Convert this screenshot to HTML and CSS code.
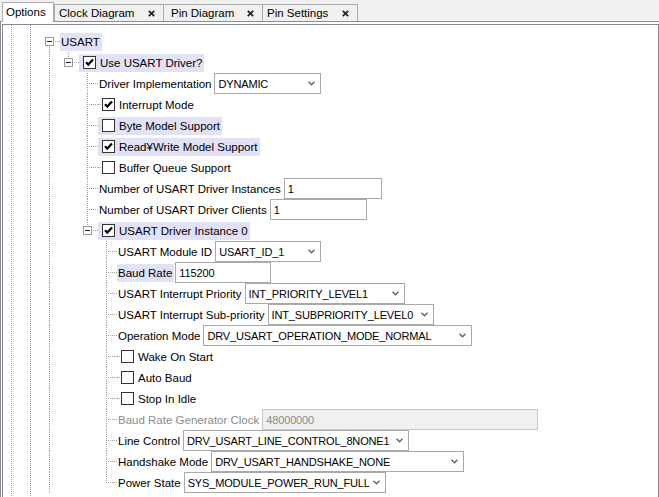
FILE: index.html
```html
<!DOCTYPE html>
<html>
<head>
<meta charset="utf-8">
<link rel="stylesheet" href="styles.css">
</head>
<body>
<div class="tabbar">
  <div class="tab active w-opt">Options</div>
  <div class="tab w-clk">Clock Diagram<svg class="x" width="7" height="7" viewBox="0 0 7 7"><path d="M0.8 0.8L6.2 6.2M6.2 0.8L0.8 6.2"/></svg></div>
  <div class="tab w-pd">Pin Diagram<svg class="x" width="7" height="7" viewBox="0 0 7 7"><path d="M0.8 0.8L6.2 6.2M6.2 0.8L0.8 6.2"/></svg></div>
  <div class="tab w-ps last">Pin Settings<svg class="x" width="7" height="7" viewBox="0 0 7 7"><path d="M0.8 0.8L6.2 6.2M6.2 0.8L0.8 6.2"/></svg></div>
</div>
<div class="page">
  <div class="tree">
    <!-- 0 -->
    <div class="row">
      <div class="g f"><span class="bx"><i></i></span></div>
      <span class="it hl">USART</span>
    </div>
    <!-- 1 -->
    <div class="row">
      <div class="g v"></div>
      <div class="g l"><span class="bx"><i></i></span></div>
      <span class="it ck hl"><span class="cb on"><svg width="11" height="11" viewBox="0 0 11 11"><path d="M2 5.2L4.3 7.6L9 2.6"/></svg></span><span class="lbl">Use USART Driver?</span></span>
    </div>
    <!-- 2 -->
    <div class="row">
      <div class="g v"></div><div class="g"></div>
      <div class="g t"></div>
      <span class="it">Driver Implementation</span>
      <div class="sel w107"><span class="val">DYNAMIC</span><svg class="chev" width="7" height="5" viewBox="0 0 7 5"><path d="M0.5 0.8L3.5 3.8L6.5 0.8"/></svg></div>
    </div>
    <!-- 3 -->
    <div class="row">
      <div class="g v"></div><div class="g"></div>
      <div class="g t"></div>
      <span class="it ck dl"><span class="cb on"><svg width="11" height="11" viewBox="0 0 11 11"><path d="M2 5.2L4.3 7.6L9 2.6"/></svg></span><span class="lbl">Interrupt Mode</span></span>
    </div>
    <!-- 4 -->
    <div class="row">
      <div class="g v"></div><div class="g"></div>
      <div class="g t"></div>
      <span class="it ck hl"><span class="cb"></span><span class="lbl">Byte Model Support</span></span>
    </div>
    <!-- 5 -->
    <div class="row">
      <div class="g v"></div><div class="g"></div>
      <div class="g t"></div>
      <span class="it ck hl"><span class="cb on"><svg width="11" height="11" viewBox="0 0 11 11"><path d="M2 5.2L4.3 7.6L9 2.6"/></svg></span><span class="lbl">Read¥Write Model Support</span></span>
    </div>
    <!-- 6 -->
    <div class="row">
      <div class="g v"></div><div class="g"></div>
      <div class="g t"></div>
      <span class="it ck dl"><span class="cb"></span><span class="lbl">Buffer Queue Support</span></span>
    </div>
    <!-- 7 -->
    <div class="row">
      <div class="g v"></div><div class="g"></div>
      <div class="g t"></div>
      <span class="it">Number of USART Driver Instances</span>
      <div class="inp w98"><span class="val">1</span></div>
    </div>
    <!-- 8 -->
    <div class="row">
      <div class="g v"></div><div class="g"></div>
      <div class="g t"></div>
      <span class="it">Number of USART Driver Clients</span>
      <div class="inp w97"><span class="val">1</span></div>
    </div>
    <!-- 9 -->
    <div class="row">
      <div class="g v"></div><div class="g"></div>
      <div class="g l"><span class="bx"><i></i></span></div>
      <span class="it ck hl"><span class="cb on"><svg width="11" height="11" viewBox="0 0 11 11"><path d="M2 5.2L4.3 7.6L9 2.6"/></svg></span><span class="lbl">USART Driver Instance 0</span></span>
    </div>
    <!-- 10 -->
    <div class="row">
      <div class="g v"></div><div class="g"></div><div class="g"></div>
      <div class="g t"></div>
      <span class="it">USART Module ID</span>
      <div class="sel w106"><span class="val">USART_ID_1</span><svg class="chev" width="7" height="5" viewBox="0 0 7 5"><path d="M0.5 0.8L3.5 3.8L6.5 0.8"/></svg></div>
    </div>
    <!-- 11 -->
    <div class="row">
      <div class="g v"></div><div class="g"></div><div class="g"></div>
      <div class="g t"></div>
      <span class="it hl">Baud Rate</span>
      <div class="inp w96"><span class="val">115200</span></div>
    </div>
    <!-- 12 -->
    <div class="row">
      <div class="g v"></div><div class="g"></div><div class="g"></div>
      <div class="g t"></div>
      <span class="it">USART Interrupt Priority</span>
      <div class="sel w160"><span class="val">INT_PRIORITY_LEVEL1</span><svg class="chev" width="7" height="5" viewBox="0 0 7 5"><path d="M0.5 0.8L3.5 3.8L6.5 0.8"/></svg></div>
    </div>
    <!-- 13 -->
    <div class="row">
      <div class="g v"></div><div class="g"></div><div class="g"></div>
      <div class="g t"></div>
      <span class="it">USART Interrupt Sub-priority</span>
      <div class="sel w166"><span class="val">INT_SUBPRIORITY_LEVEL0</span><svg class="chev" width="7" height="5" viewBox="0 0 7 5"><path d="M0.5 0.8L3.5 3.8L6.5 0.8"/></svg></div>
    </div>
    <!-- 14 -->
    <div class="row">
      <div class="g v"></div><div class="g"></div><div class="g"></div>
      <div class="g t"></div>
      <span class="it">Operation Mode</span>
      <div class="sel w269"><span class="val">DRV_USART_OPERATION_MODE_NORMAL</span><svg class="chev" width="7" height="5" viewBox="0 0 7 5"><path d="M0.5 0.8L3.5 3.8L6.5 0.8"/></svg></div>
    </div>
    <!-- 15 -->
    <div class="row">
      <div class="g v"></div><div class="g"></div><div class="g"></div>
      <div class="g t"></div>
      <span class="it ck dl"><span class="cb"></span><span class="lbl">Wake On Start</span></span>
    </div>
    <!-- 16 -->
    <div class="row">
      <div class="g v"></div><div class="g"></div><div class="g"></div>
      <div class="g t"></div>
      <span class="it ck dl"><span class="cb"></span><span class="lbl">Auto Baud</span></span>
    </div>
    <!-- 17 -->
    <div class="row">
      <div class="g v"></div><div class="g"></div><div class="g"></div>
      <div class="g t"></div>
      <span class="it ck dl"><span class="cb"></span><span class="lbl">Stop In Idle</span></span>
    </div>
    <!-- 18 -->
    <div class="row">
      <div class="g v"></div><div class="g"></div><div class="g"></div>
      <div class="g t"></div>
      <span class="it dis">Baud Rate Generator Clock</span>
      <div class="inp dis w276"><span class="val">48000000</span></div>
    </div>
    <!-- 19 -->
    <div class="row">
      <div class="g v"></div><div class="g"></div><div class="g"></div>
      <div class="g t"></div>
      <span class="it">Line Control</span>
      <div class="sel w226"><span class="val">DRV_USART_LINE_CONTROL_8NONE1</span><svg class="chev" width="7" height="5" viewBox="0 0 7 5"><path d="M0.5 0.8L3.5 3.8L6.5 0.8"/></svg></div>
    </div>
    <!-- 20 -->
    <div class="row">
      <div class="g v"></div><div class="g"></div><div class="g"></div>
      <div class="g t"></div>
      <span class="it">Handshake Mode</span>
      <div class="sel w253"><span class="val">DRV_USART_HANDSHAKE_NONE</span><svg class="chev" width="7" height="5" viewBox="0 0 7 5"><path d="M0.5 0.8L3.5 3.8L6.5 0.8"/></svg></div>
    </div>
    <!-- 21 -->
    <div class="row">
      <div class="g v"></div><div class="g"></div><div class="g"></div>
      <div class="g l"></div>
      <span class="it">Power State</span>
      <div class="sel w202"><span class="val">SYS_MODULE_POWER_RUN_FULL</span><svg class="chev" width="7" height="5" viewBox="0 0 7 5"><path d="M0.5 0.8L3.5 3.8L6.5 0.8"/></svg></div>
    </div>
  </div>
</div>
</body>
</html>
```

FILE: styles.css
```css
* { box-sizing: border-box; }
html, body { margin: 0; padding: 0; }
body {
  width: 659px;
  height: 497px;
  overflow: hidden;
  background: #fff;
  font-family: "Liberation Sans", Arial, sans-serif;
  font-size: 11.5px;
  color: #000;
  --dv: repeating-linear-gradient(to bottom, #a0a0a0 0 1px, transparent 1px 2px);
  --dh: repeating-linear-gradient(to right, #a0a0a0 0 1px, transparent 1px 2px);
}

/* tabs */
.tabbar {
  display: flex;
  align-items: flex-end;
  height: 22px;
  background: #f0f0f0;
  border-bottom: 1px solid #898c95;
  padding-left: 2px;
}
.tab {
  display: flex;
  align-items: center;
  height: 17px;
  border-top: 1px solid #acacac;
  border-left: 1px solid #acacac;
  background: #f0f0f0;
  padding: 0 8px 0 4px;
  white-space: nowrap;
}
.tab.last { border-right: 1px solid #acacac; }
.tab.active {
  height: 20px;
  margin-bottom: -1px;
  background: #fff;
  border: 1px solid #acacac;
  border-bottom: none;
  padding-left: 3px;
  padding-bottom: 1px;
}
.tab .x { margin-left: auto; }
.tab .x path { stroke: #222; stroke-width: 1.7; fill: none; }
.w-opt { width: 52px; }
.w-clk { width: 109px; }
.w-pd { width: 99px; padding-left: 7px; }
.w-ps { width: 96px; }

/* page + tree */
.page {
  border-left: 1px solid #898c95;
  padding: 2px 0 0 1px;
  height: 475px;
}
.tree {
  height: 100%;
  border-top: 1px solid #828790;
  border-left: 1px solid #828790;
  border-right: 1px solid #828790;
  padding-top: 6px;
  padding-left: 38px;
  background-image: var(--dv), var(--dv);
  background-size: 1px 100%, 1px 100%;
  background-position: 8px 0, 27px 0;
  background-repeat: no-repeat;
}
.row {
  display: flex;
  align-items: center;
  height: 21px;
  white-space: nowrap;
}

/* guide cells */
.g {
  flex: none;
  width: 19px;
  height: 21px;
  display: flex;
  align-items: center;
  background-repeat: no-repeat;
}
.v {
  background-image: var(--dv);
  background-size: 1px 100%;
  background-position: 8px 0;
}
.t {
  background-image: var(--dv), var(--dh);
  background-size: 1px 100%, 11px 1px;
  background-position: 8px 0, 8px 10px;
}
.l {
  background-image: var(--dv), var(--dh);
  background-size: 1px 11px, 11px 1px;
  background-position: 8px 0, 8px 10px;
}
.f {
  background-image: var(--dv), var(--dh);
  background-size: 1px 11px, 11px 1px;
  background-position: 8px 10px, 8px 10px;
}
.bx {
  width: 9px;
  height: 9px;
  margin-left: 4px;
  border: 1px solid #9a9a9a;
  background: #fff;
  display: flex;
  align-items: center;
  justify-content: center;
}
.bx i {
  display: block;
  width: 5px;
  height: 1px;
  background: #222;
}

/* items */
.it {
  display: inline-flex;
  align-items: center;
  height: 18px;
  padding: 0 2px 0 1px;
}
.hl { background: #e1e1f7; }
.it.ck { padding-left: 4px; }
.it.dl {
  background-image: var(--dh);
  background-size: 3px 1px;
  background-position: 0 8px;
  background-repeat: no-repeat;
}
.cb {
  flex: none;
  width: 13px;
  height: 13px;
  border: 1px solid #333;
  background: #fff;
  display: flex;
}
.cb path { fill: none; stroke: #000; stroke-width: 2.2; }
.lbl { margin-left: 4px; }
.dis { color: #8a8a8a; }

/* fields */
.sel, .inp {
  flex: none;
  display: flex;
  align-items: center;
  height: 21px;
  margin-left: 1px;
  padding-left: 3px;
  border: 1px solid #a9a9a9;
  background: #fff;
  font-size: 11px;
  letter-spacing: -0.15px;
}
.val {
  flex: 1;
  min-width: 0;
  overflow: hidden;
}
.sel .chev { flex: none; margin-left: 3px; margin-right: 5px; }
.chev path { fill: none; stroke: #666; stroke-width: 1.5; }
.inp.dis { background: #f0f0f0; border-color: #c9c9c9; }

.w96 { width: 96px; }
.w97 { width: 97px; }
.w98 { width: 98px; }
.w106 { width: 106px; }
.w107 { width: 107px; }
.w160 { width: 160px; }
.w166 { width: 166px; }
.w202 { width: 202px; }
.w226 { width: 226px; }
.w253 { width: 253px; }
.w269 { width: 269px; }
.w276 { width: 276px; }
```
